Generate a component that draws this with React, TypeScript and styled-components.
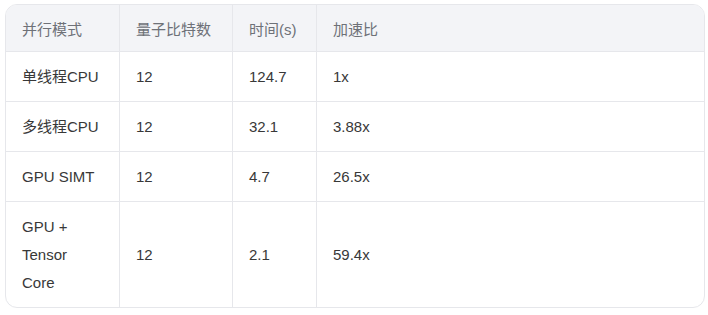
import styled, { createGlobalStyle } from "styled-components";

const GlobalStyle = createGlobalStyle`
  html, body {
    margin: 0;
    padding: 0;
    background: #ffffff;
  }
  body {
    font-family: "Liberation Sans", "Noto Sans CJK SC", Arial, sans-serif;
  }
`;

const rows = [
  { mode: "单线程CPU", qubits: "12", time: "124.7", speedup: "1x" },
  { mode: "多线程CPU", qubits: "12", time: "32.1", speedup: "3.88x" },
  { mode: "GPU SIMT", qubits: "12", time: "4.7", speedup: "26.5x" },
  { mode: "GPU + Tensor Core", qubits: "12", time: "2.1", speedup: "59.4x" },
];

const columns = [
  { label: "并行模式", width: 114 },
  { label: "量子比特数", width: 113 },
  { label: "时间(s)", width: 84 },
  { label: "加速比", width: 387 },
];

const App = () => {
  return (
    <>
      <GlobalStyle />
      <Page>
        <TableFrame>
          <Table>
            <colgroup>
              {columns.map((c) => (
                <col key={c.label} style={{ width: c.width }} />
              ))}
            </colgroup>
            <thead>
              <tr>
                {columns.map((c) => (
                  <HeadCell key={c.label}>{c.label}</HeadCell>
                ))}
              </tr>
            </thead>
            <tbody>
              {rows.map((r) => (
                <tr key={r.mode}>
                  <BodyCell>{r.mode}</BodyCell>
                  <BodyCell>{r.qubits}</BodyCell>
                  <BodyCell>{r.time}</BodyCell>
                  <BodyCell>{r.speedup}</BodyCell>
                </tr>
              ))}
            </tbody>
          </Table>
        </TableFrame>
      </Page>
    </>
  );
};

export default App;

const Page = styled.div`
  padding: 4px 3px 0 5px;
`;

const TableFrame = styled.div`
  width: 700px;
  box-sizing: border-box;
  border: 1px solid #e6e7eb;
  border-radius: 12px;
  overflow: hidden;
`;

const Table = styled.table`
  width: 698px;
  table-layout: fixed;
  border-collapse: separate;
  border-spacing: 0;
  font-size: 15px;
  line-height: 28px;
`;

const HeadCell = styled.th`
  box-sizing: border-box;
  padding: 11px 16px 7px;
  text-align: left;
  font-weight: 400;
  color: #6e7178;
  background: #f3f4f7;
  border-right: 1px solid #e6e7eb;

  &:last-child {
    border-right: none;
  }
`;

const BodyCell = styled.td`
  box-sizing: border-box;
  padding: 10.5px 16px;
  text-align: left;
  vertical-align: middle;
  color: #383838;
  border-top: 1px solid #e6e7eb;
  border-right: 1px solid #e6e7eb;

  &:last-child {
    border-right: none;
  }
`;
